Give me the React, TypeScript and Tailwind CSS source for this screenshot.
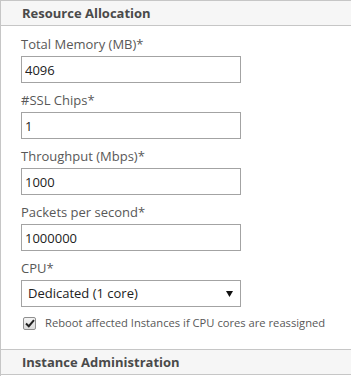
const FIELDS = [
  { label: "Total Memory (MB)*", value: "4096" },
  { label: "#SSL Chips*", value: "1" },
  { label: "Throughput (Mbps)*", value: "1000" },
  { label: "Packets per second*", value: "1000000" },
];

function SectionHeader({ title }: { title: string }) {
  return (
    <div className="flex h-[25px] items-center border-b border-[#c6c6c6] bg-[#f6f6f6] pl-[21px] pt-[2px]">
      <span className="text-[13px] font-bold text-[#4a4a4a]">{title}</span>
    </div>
  );
}

export default function App() {
  return (
    <div
      className="h-[376px] w-[351px] overflow-hidden border-l border-t border-[#c6c6c6] bg-white"
      style={{ fontFamily: '"Open Sans", "Noto Sans", sans-serif' }}
    >
      <SectionHeader title="Resource Allocation" />
      <div className="flex flex-col pl-[20px] pt-[8px]">
        {FIELDS.map((f) => (
          <div key={f.label} className="mb-[7px] flex flex-col">
            <label className="h-[20px] text-[13px] leading-[20px] text-[#585858]">{f.label}</label>
            <input
              defaultValue={f.value}
              className="mt-[2px] h-[27px] w-[220px] border border-[#a3a3a3] px-[3px] text-[13px] text-[#222] outline-none"
            />
          </div>
        ))}
        <label className="h-[20px] text-[13px] leading-[20px] text-[#585858]">CPU*</label>
        <div className="mt-[2px] flex h-[27px] w-[220px] items-center justify-between border border-[#a3a3a3] pl-[6px] pr-[7px]">
          <span className="text-[13px] text-[#222]">Dedicated (1 core)</span>
          <svg width="7" height="6" viewBox="0 0 7 6">
            <path d="M0 0 H7 L3.5 6 Z" fill="#111" />
          </svg>
        </div>
        <div className="mt-[8px] flex h-[16px] items-center gap-[9px] pl-[2px]">
          <span className="flex h-[13px] w-[13px] shrink-0 items-center justify-center rounded-[2px] border border-[#8f8f8f] bg-gradient-to-b from-[#f4f4f4] to-[#dcdcdc]">
            <svg width="10" height="9" viewBox="0 0 10 9">
              <path d="M1 4.5 L3.8 7.2 L9 1.2" fill="none" stroke="#222" strokeWidth="2" />
            </svg>
          </span>
          <span className="whitespace-nowrap text-[11.2px] text-[#585858]">
            Reboot affected Instances if CPU cores are reassigned
          </span>
        </div>
      </div>
      <div className="mt-[18px] border-t border-[#c6c6c6]">
        <SectionHeader title="Instance Administration" />
      </div>
    </div>
  );
}
